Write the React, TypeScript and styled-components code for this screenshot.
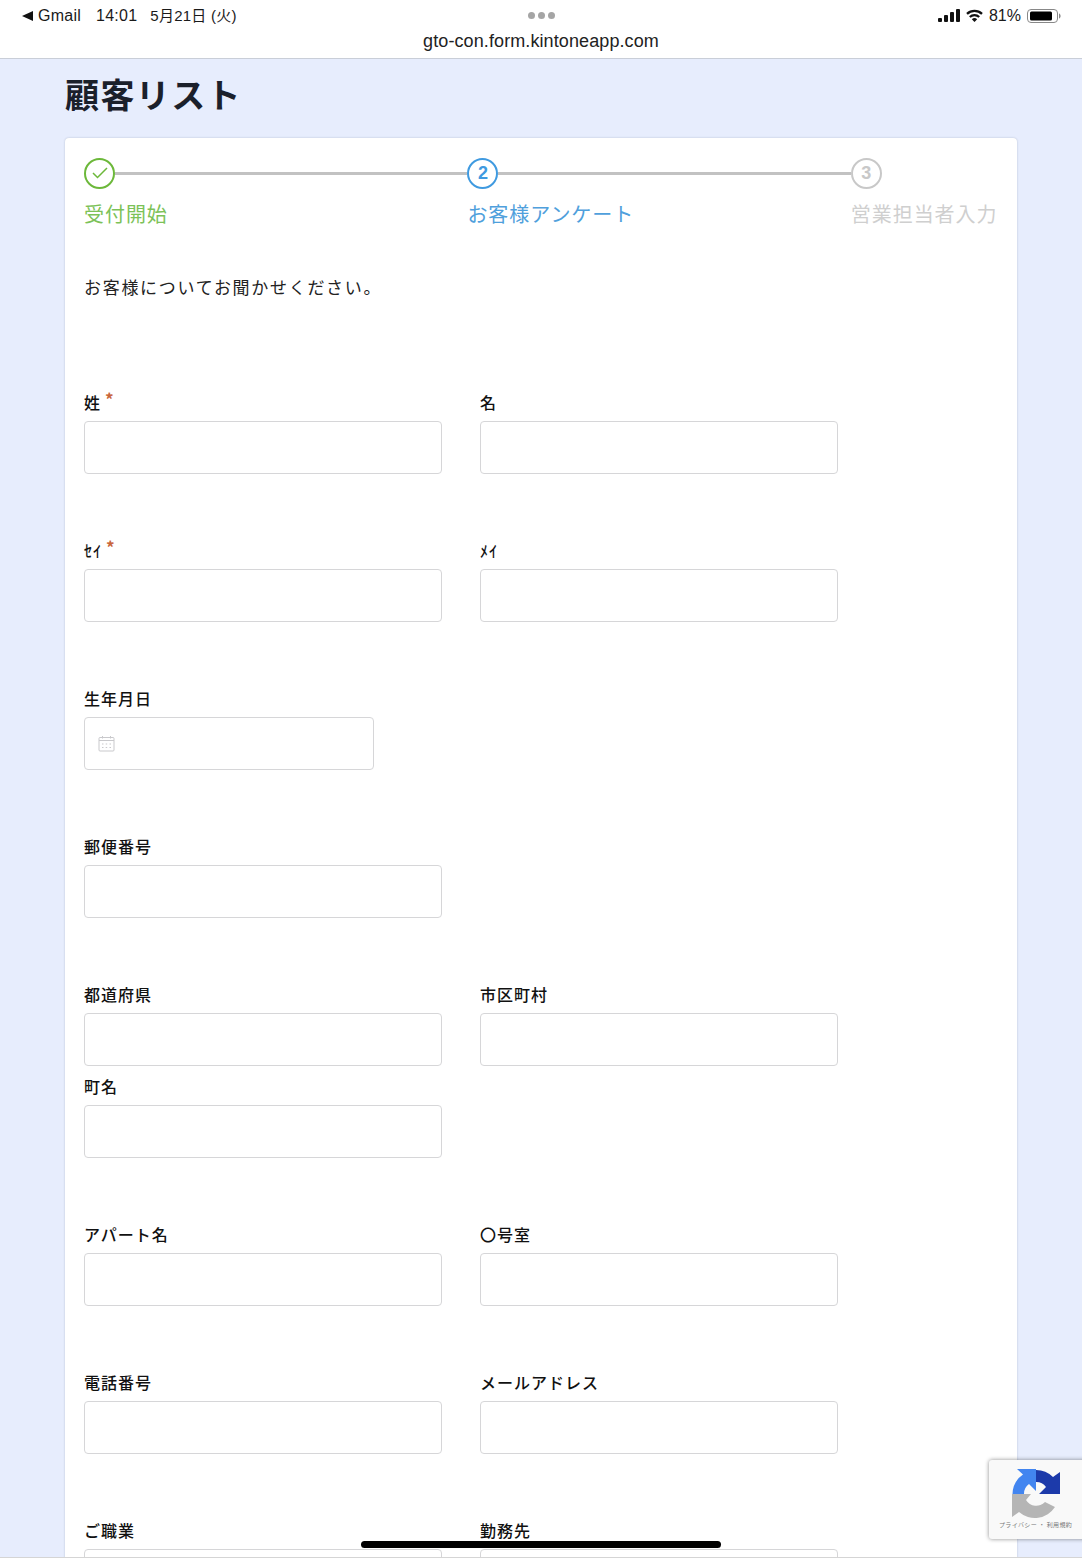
import React from 'react';
import styled, {createGlobalStyle} from 'styled-components';

const GlobalStyle = createGlobalStyle`
  html, body {
    margin: 0;
    padding: 0;
    background: #e7edfd;
  }
  * {
    box-sizing: border-box;
  }
`;

const Page = styled.div`
  position: relative;
  width: 1082px;
  height: 1558px;
  overflow: hidden;
  background: #e7edfd;
  color: #111;
  font-family: "Noto Sans CJK JP", "Noto Sans", sans-serif;
`;
const TopBar = styled.header`
  height: 59px;
  background: #fff;
  border-bottom: 1px solid #c9ced8;
  display: flex;
  flex-direction: column;
  font-family: "Liberation Sans", "Noto Sans CJK JP", sans-serif;
`;
const StatusRow = styled.div`
  height: 31px;
  padding: 0 21px 0 22px;
  display: grid;
  grid-template-columns: 1fr auto 1fr;
  align-items: center;
  font-size: 16px;
  color: #1a1a1a;
`;
const StatusLeft = styled.div`
  display: flex;
  align-items: center;
  letter-spacing: 0.25px;
`;
const BackArrow = styled.span`
  width: 0;
  height: 0;
  border-style: solid;
  border-width: 5px 11px 5px 0;
  border-color: transparent #111 transparent transparent;
  margin-right: 5px;
`;
const StatusTime = styled.span`
  margin-left: 15px;
`;
const StatusDate = styled.span`
  margin: -2px 0 0 13px;
  font-size: 15px;
`;
const Dots = styled.div`
  display: flex;
  gap: 3px;
`;
const Dot = styled.i`
  width: 7px;
  height: 7px;
  border-radius: 50%;
  background: #a5a5a5;
`;
const StatusRight = styled.div`
  display: flex;
  justify-content: flex-end;
  align-items: center;
  gap: 6px;
`;
const Url = styled.div`
  text-align: center;
  font-size: 18px;
  line-height: 20px;
  letter-spacing: 0.1px;
  color: #222;
`;
const Main = styled.main`
  width: 952px;
  margin-left: 65px;
`;
const Title = styled.h1`
  margin: 0;
  height: 79px;
  font-size: 34px;
  line-height: 70px;
  font-weight: 700;
  letter-spacing: 1.4px;
  color: #1b202b;
`;
const Card = styled.section`
  background: #fff;
  border-radius: 4px;
  box-shadow: 0 0 2px rgba(60, 70, 100, 0.3);
  padding: 19.5px 19px 0;
  height: 1500px;
`;
const Steps = styled.div`
  display: flex;
`;
const Step = styled.div<{$last?: boolean}>`
  width: ${p => (p.$last ? 'auto' : '383.4px')};
  flex-shrink: 0;
`;
const StepHead = styled.div`
  display: flex;
  align-items: center;
  height: 31px;
`;
const StepCircle = styled.div<{$color: string}>`
  width: 31px;
  height: 31px;
  flex-shrink: 0;
  border-radius: 50%;
  border: 2.5px solid ${p => p.$color};
  color: ${p => p.$color};
  display: flex;
  align-items: center;
  justify-content: center;
  font-family: "Liberation Sans", sans-serif;
  font-size: 18px;
  font-weight: 700;
`;
const StepLine = styled.div`
  flex: 1;
  height: 3px;
  background: #c2c2c2;
`;
const StepLabel = styled.div<{$color: string}>`
  margin-top: 13.5px;
  font-size: 20px;
  line-height: 24px;
  letter-spacing: 0.95px;
  color: ${p => p.$color};
  white-space: nowrap;
`;
const Lead = styled.p`
  margin: 48px 0 82px;
  font-size: 17px;
  line-height: 26px;
  letter-spacing: 1.7px;
  color: #222;
`;
const FieldGroup = styled.div`
  display: flex;
  flex-wrap: wrap;
  column-gap: 38px;
  width: 800px;
  margin-bottom: 56px;
`;
const Field = styled.div`
  width: 358px;
`;
const Label = styled.label`
  display: block;
  height: 39px;
  padding-top: 9px;
  font-size: 16px;
  line-height: 22px;
  font-weight: 500;
  letter-spacing: 1px;
  color: #111;
`;
const Required = styled.span`
  position: relative;
  top: -3px;
  margin-left: 4px;
  font-size: 17px;
  font-weight: 700;
  color: #c9663c;
`;
const Input = styled.input`
  display: block;
  width: 100%;
  height: 53px;
  background: #fff;
  border: 1px solid #d6d6d8;
  border-radius: 4px;
`;
const DateBox = styled.div`
  width: 290px;
  height: 53px;
  display: flex;
  align-items: center;
  padding-left: 13px;
  border: 1px solid #d6d6d8;
  border-radius: 4px;
`;
const Recaptcha = styled.aside`
  position: absolute;
  left: 989px;
  top: 1460px;
  width: 100px;
  height: 79px;
  background: #f9f9f9;
  border-radius: 3px;
  box-shadow: 0 0 4px rgba(0, 0, 0, 0.45);
`;
const RecaptchaLogo = styled.div`
  position: absolute;
  left: 23px;
  top: 9px;
  line-height: 0;
`;
const RecaptchaText = styled.span`
  position: absolute;
  left: 10px;
  top: 60px;
  font-size: 6px;
  line-height: 9px;
  letter-spacing: 0.35px;
  color: #777;
  white-space: pre;
`;
const HomeIndicator = styled.div`
  position: absolute;
  left: 361px;
  top: 1541px;
  width: 360px;
  height: 7px;
  border-radius: 4px;
  background: #000;
`;
const BottomEdge = styled.div`
  position: absolute;
  left: 0;
  right: 0;
  bottom: 0;
  height: 1px;
  background: #d5d5d5;
`;

type FieldDef = {label: string; required?: boolean};

const groups: FieldDef[][] = [
  [{label: '姓', required: true}, {label: '名'}],
  [{label: 'ｾｲ', required: true}, {label: 'ﾒｲ'}],
];
const groupsAfterDate: FieldDef[][] = [
  [{label: '郵便番号'}],
  [{label: '都道府県'}, {label: '市区町村'}, {label: '町名'}],
  [{label: 'アパート名'}, {label: '〇号室'}],
  [{label: '電話番号'}, {label: 'メールアドレス'}],
  [{label: 'ご職業'}, {label: '勤務先'}],
];

function SignalIcon() {
  return (
    <svg width="22" height="13" viewBox="0 0 22 13">
      <rect x="0" y="9" width="4" height="4" rx="1" fill="#111"/>
      <rect x="6" y="6" width="4" height="7" rx="1" fill="#111"/>
      <rect x="12" y="3" width="4" height="10" rx="1" fill="#111"/>
      <rect x="18" y="0" width="4" height="13" rx="1" fill="#111"/>
    </svg>
  );
}

function WifiIcon() {
  return (
    <svg width="17" height="13" viewBox="0 0 17 13" fill="none" stroke="#111" strokeWidth="2.3">
      <path d="M1 4.800a11 11 0 0 1 15 0"/>
      <path d="M3.800 8a7 7 0 0 1 9.400 0"/>
      <path d="M8.500 13 5.800 10.200a4 4 0 0 1 5.400 0Z" fill="#111" stroke="none"/>
    </svg>
  );
}

function BatteryIcon() {
  return (
    <svg width="34" height="14" viewBox="0 0 34 14">
      <rect x="0.500" y="0.500" width="30" height="13" rx="3.500" fill="none" stroke="#888"/>
      <rect x="3" y="2.500" width="22" height="9" rx="1.500" fill="#000"/>
      <path d="M32 4.500v5c1-.3 1.600-1.300 1.600-2.500S33 4.800 32 4.500Z" fill="#888"/>
    </svg>
  );
}

function CalendarIcon() {
  return (
    <svg width="17" height="17" viewBox="0 0 17 17" fill="none" stroke="#c9c9cc" strokeWidth="1">
      <rect x="1" y="2.500" width="15" height="13.500" rx="1"/>
      <path d="M1 5.500h15M4.500 1v2.500M12.500 1v2.500"/>
      <path d="M4 9h1.500M7.700 9h1.500M11.500 9h1.500M4 12.500h1.500M7.700 12.500h1.500M11.500 12.500h1.500"/>
    </svg>
  );
}

function RecaptchaIcon() {
  return (
    <svg width="49" height="49" viewBox="0 0 49 49">
      <path d="M5 0H24V22L17 15A12 12 0 0 0 12 25H0.500A24 24 0 0 1 11 5.500Z" fill="#4285f0"/>
      <path d="M24 1A24 24 0 0 1 41 8L48 3V25H27L34 18A12 12 0 0 0 24 13Z" fill="#1c3aaa"/>
      <path d="M0 25H19L14 31A12 12 0 0 0 33 33L43 38A24 24 0 0 1 7 43L0 48Z" fill="#b5b5b5"/>
    </svg>
  );
}

function FormField({label, required}: FieldDef) {
  return (
    <Field>
      <Label>{label}{required && <Required>*</Required>}</Label>
      <Input type="text" aria-label={label}/>
    </Field>
  );
}

function FormGroup({fields}: {fields: FieldDef[]}) {
  return (
    <FieldGroup>
      {fields.map(f => <FormField key={f.label} {...f}/>)}
    </FieldGroup>
  );
}

export default function App() {
  return (
    <Page>
      <GlobalStyle/>
      <TopBar>
        <StatusRow>
          <StatusLeft>
            <BackArrow/>Gmail<StatusTime>14:01</StatusTime><StatusDate>5月21日 (火)</StatusDate>
          </StatusLeft>
          <Dots><Dot/><Dot/><Dot/></Dots>
          <StatusRight>
            <SignalIcon/><WifiIcon/>81%<BatteryIcon/>
          </StatusRight>
        </StatusRow>
        <Url>gto-con.form.kintoneapp.com</Url>
      </TopBar>
      <Main>
        <Title>顧客リスト</Title>
        <Card>
          <Steps>
            <Step>
              <StepHead>
                <StepCircle $color="#6cb83a">
                  <svg width="16" height="12" viewBox="0 0 16 12" fill="none" stroke="#6cb83a" strokeWidth="1.500">
                    <path d="M1 6 5.500 10.500 15 1"/>
                  </svg>
                </StepCircle>
                <StepLine/>
              </StepHead>
              <StepLabel $color="#7cc258">受付開始</StepLabel>
            </Step>
            <Step>
              <StepHead>
                <StepCircle $color="#3f9ae0">2</StepCircle>
                <StepLine/>
              </StepHead>
              <StepLabel $color="#4fa0dc">お客様アンケート</StepLabel>
            </Step>
            <Step $last>
              <StepHead>
                <StepCircle $color="#c8c8c8">3</StepCircle>
              </StepHead>
              <StepLabel $color="#cfcfcf">営業担当者入力</StepLabel>
            </Step>
          </Steps>
          <Lead>お客様についてお聞かせください。</Lead>
          {groups.map(g => <FormGroup key={g[0].label} fields={g}/>)}
          <FieldGroup>
            <Field>
              <Label>生年月日</Label>
              <DateBox><CalendarIcon/></DateBox>
            </Field>
          </FieldGroup>
          {groupsAfterDate.map(g => <FormGroup key={g[0].label} fields={g}/>)}
        </Card>
      </Main>
      <Recaptcha>
        <RecaptchaLogo><RecaptchaIcon/></RecaptchaLogo>
        <RecaptchaText>プライバシー ・ 利用規約</RecaptchaText>
      </Recaptcha>
      <HomeIndicator/>
      <BottomEdge/>
    </Page>
  );
}
